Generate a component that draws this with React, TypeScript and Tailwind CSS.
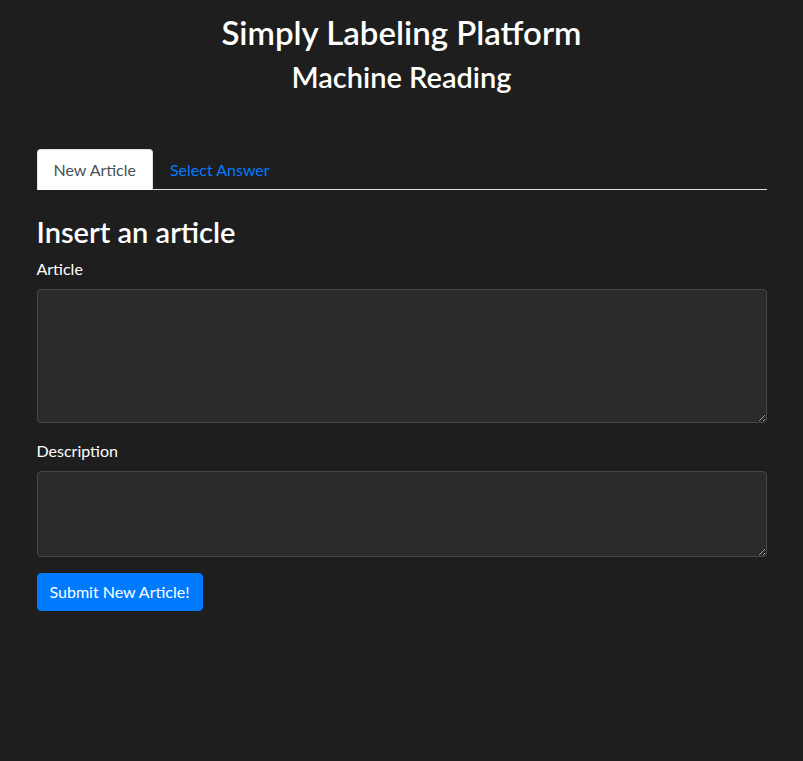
import { useState } from "react";

const App = () => {
  const [tab, setTab] = useState("new");
  const [article, setArticle] = useState("");
  const [description, setDescription] = useState("");

  return (
    <div
      className="min-h-[761px] bg-[#1e1e1e] text-white"
      style={{ fontFamily: '"Lato", "Noto Sans", sans-serif' }}
    >
      <div className="w-[730px] mx-auto">
        {/* Header */}
        <div className="pt-[13px] text-center">
          <h1 className="text-[33px] leading-[1.2] font-semibold">Simply Labeling Platform</h1>
          <h2 className="text-[29px] leading-[1.2] font-semibold mt-[7px]">Machine Reading</h2>
        </div>

        {/* Tabs */}
        <div className="mt-[55px] flex border-b border-[#dee2e6]">
          <button
            type="button"
            onClick={() => setTab("new")}
            className={`px-4 py-2 text-base leading-6 rounded-t border border-b-0 -mb-px ${
              tab === "new"
                ? "bg-white text-[#495057] border-[#dee2e6]"
                : "text-[#007bff] border-transparent"
            }`}
          >
            New Article
          </button>
          <button
            type="button"
            onClick={() => setTab("select")}
            className={`px-4 py-2 text-base leading-6 rounded-t border border-b-0 -mb-px ${
              tab === "select"
                ? "bg-white text-[#495057] border-[#dee2e6]"
                : "text-[#007bff] border-transparent"
            }`}
          >
            Select Answer
          </button>
        </div>

        {/* Form */}
        <div className="pt-[25px]">
          <h3 className="text-[29px] leading-[1.2] font-semibold mb-[7px]">Insert an article</h3>

          <div className="mb-4">
            <label htmlFor="article" className="block text-base leading-6 mb-2">
              Article
            </label>
            <textarea
              id="article"
              value={article}
              onChange={(e) => setArticle(e.target.value)}
              className="block w-full h-[134px] bg-[#2b2b2b] border border-[#474747] rounded px-3 py-1.5 text-white focus:outline-none"
            />
          </div>

          <div className="mb-4">
            <label htmlFor="description" className="block text-base leading-6 mb-2">
              Description
            </label>
            <textarea
              id="description"
              value={description}
              onChange={(e) => setDescription(e.target.value)}
              className="block w-full h-[86px] bg-[#2b2b2b] border border-[#474747] rounded px-3 py-1.5 text-white focus:outline-none"
            />
          </div>

          <button
            type="button"
            className="bg-[#007bff] text-white text-base leading-6 px-3 py-1.5 rounded border border-[#007bff]"
          >
            Submit New Article!
          </button>
        </div>
      </div>
    </div>
  );
};

export default App;
